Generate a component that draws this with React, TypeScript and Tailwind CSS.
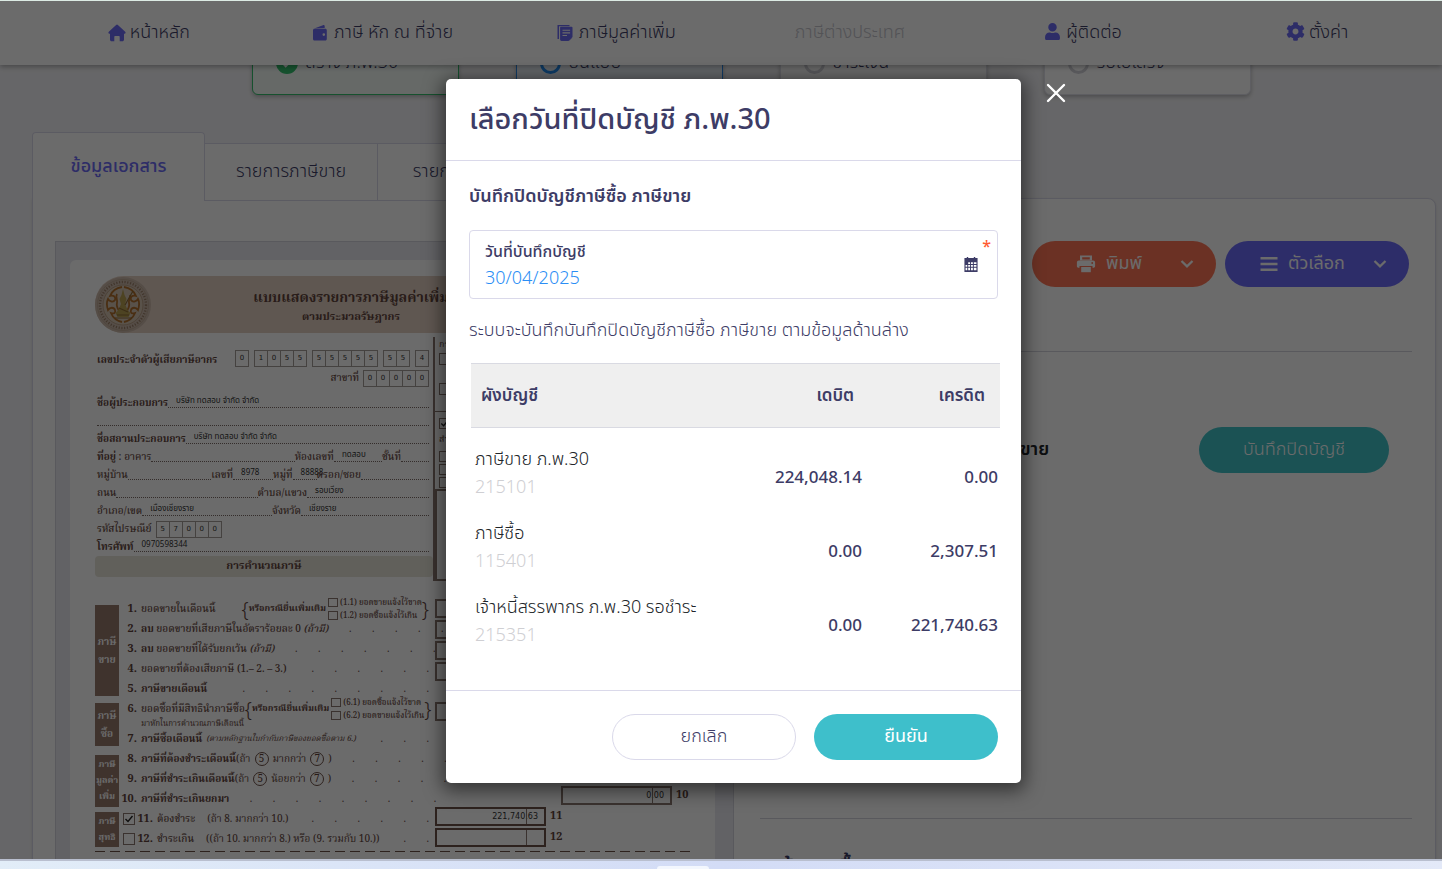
import React, { useState } from 'react';
import { FaCog, FaUser } from 'react-icons/fa';

const HomeIcon = () => (
  <svg viewBox="0 0 18 18" className="h-[18px] w-[18px]" fill="currentColor">
    <path d="M8.1.9a1.3 1.3 0 0 1 1.8 0l7.3 6.9c.8.8.4 1.9-.6 1.9H16v5.8c0 1-.7 1.8-1.7 1.8h-2.6v-4.4c0-.6-.4-1-1-1H7.3c-.6 0-1 .4-1 1v4.4H3.7c-1 0-1.700-.8-1.700-1.800V9.700h-.6c-1 0-1.400-1.100-.6-1.900z" />
  </svg>
);

const WalletIcon = () => (
  <svg viewBox="0 0 16 18" className="h-[18px] w-4" fill="currentColor">
    <path d="M2.200 4.500 11 1.200c.9-.3 1.700.3 1.700 1.200V4z" />
    <path
      fillRule="evenodd"
      d="M2.500 4.700h10.800c.9 0 1.500.6 1.500 1.500v8.900c0 .9-.6 1.500-1.500 1.500H2.500c-.9 0-1.500-.6-1.500-1.500V6.200c0-.9.600-1.500 1.500-1.500zm9.300 4.600a1.300 1.300 0 1 0 0 2.600 1.300 1.300 0 0 0 0-2.600z"
    />
  </svg>
);

const DocIcon = () => (
  <svg viewBox="0 0 16 18" className="h-[18px] w-4" fill="currentColor">
    <path d="M.5 1h1.500v14H.5zM.5 1h12v1.200H.5z" />
    <path
      fillRule="evenodd"
      d="M4 2.700h10.600c.5 0 .9.4.9.9V13l-4 4H4.500c-.8 0-1.400-.6-1.400-1.400V3.600c0-.5.4-.9.900-.9zm1.500 3v1.100h7.600V5.700zm0 2.600v1.100h7.600V8.300zm0 2.600V12h4.500v-1.100z"
    />
    <path d="M12.200 17v-3.200h3.200z" opacity=".5" />
  </svg>
);

const PrintIcon = () => (
  <svg viewBox="0 0 20 18" className="h-[18px] w-5" fill="currentColor">
    <path fillRule="evenodd" d="M4 .5h12v5H4zm2.200 1.800v2.200h7.600V2.300z" />
    <path
      fillRule="evenodd"
      d="M2.800 5.500h14.400c1.100 0 1.900.8 1.900 1.900v3.900c0 .8-.6 1.400-1.400 1.400h-1.200V11h-13v1.700H2.300c-.8 0-1.400-.6-1.400-1.400V7.400c0-1.100.8-1.900 1.900-1.900zm13.400 1.600a.9.9 0 1 0 0 1.800.9.900 0 0 0 0-1.800z"
    />
    <path d="M5.200 12h9.600v5.200H5.200z" />
  </svg>
);

const BarsIcon = () => (
  <svg viewBox="0 0 18 16" className="h-4 w-[18px]" fill="none" stroke="currentColor" strokeWidth="2.600">
    <path d="M.5 2.300h17M.5 8h17M.5 13.700h17" />
  </svg>
);

const ChevronIcon = () => (
  <svg viewBox="0 0 14 10" className="h-[10px] w-[14px]" fill="none" stroke="currentColor" strokeWidth="2.200">
    <path d="m1.500 2 5.500 5.400L12.500 2" />
  </svg>
);

const CalendarIcon = () => (
  <svg viewBox="0 0 14 16" className="h-[15px] w-[14px]" fill="currentColor">
    <path
      fillRule="evenodd"
      d="M2.500 0H4v1h6V0h1.500v1H14v15H0V1h2.500zM4 5.500v2h2v-2zm3 0v2h2v-2zm3 0v2h2.800v-2zM1.200 8.500v2H3v-2zm2.800 0v2h2v-2zm3 0v2h2v-2zm3 0v2h2.800v-2zm-8.800 3V14H3v-2.500zm2.800 0V14h2v-2.500zm3 0V14h2v-2.500zm3 0V14h2.800v-2.500z"
    />
  </svg>
);

const Emblem = () => (
  <svg viewBox="0 0 56 56" className="h-14 w-14 shrink-0" fill="none">
    <circle cx="28" cy="28" r="28" fill="#cbb8a9" />
    <circle cx="28" cy="28" r="23" stroke="#9c8069" strokeWidth="2.400" strokeDasharray="1.200 1.600" />
    <circle cx="28" cy="28" r="25.500" stroke="#b39d88" strokeWidth=".6" />
    <circle cx="28" cy="28" r="20" fill="#d3c3b1" stroke="#a98a6c" strokeWidth=".6" />
    <g stroke="#b06f2c" strokeWidth="1.800">
      <path d="M27 10c-6 1-10 4-12 9 4-1 6 1 5 4-2 3-6 1-7-1-2 4-1 8 0 11 2-3 6-3 7 0s-1 4-4 3c2 5 6 8 11 9" />
      <path d="M29 10c6 1 10 4 12 9-4-1-6 1-5 4 2 3 6 1 7-1 2 4 1 8 0 11-2-3-6-3-7 0s1 4 4 3c-2 5-6 8-11 9" />
      <path d="M22 17c-2 3 1 6 0 9s1 6 2 8M35 18c1 3-2 5-1 8s-1 6-2 8" />
    </g>
    <path d="m28 12 1.500 6 2 4-1.500 5 2.500 6 3 3-2 4h-11l-2-4 3-3 2.500-6-1.500-5 2-4z" fill="#b7a052" />
    <path d="m30 28 8-14M20 41h17M22 38h12M24 31l9 4" stroke="#8d6c35" strokeWidth="1.200" />
  </svg>
);

const CheckMark = () => (
  <svg viewBox="0 0 10 10" className="h-full w-full" fill="none" stroke="#222" strokeWidth="1.400">
    <path d="m1.500 5 2.500 2.500L8.500 2" />
  </svg>
);

const navItems = [
  { label: 'หน้าหลัก', icon: <HomeIcon />, gap: 'gap-1' },
  { label: 'ภาษี หัก ณ ที่จ่าย', icon: <WalletIcon />, gap: 'gap-1.5' },
  { label: 'ภาษีมูลค่าเพิ่ม', icon: <DocIcon />, gap: 'gap-1.5' },
  { label: 'ภาษีต่างประเทศ', icon: null, gap: '' },
  { label: 'ผู้ติดต่อ', icon: <FaUser className="mb-1 h-[17px] w-[15px]" />, gap: 'gap-1.5' },
  { label: 'ตั้งค่า', icon: <FaCog className="mb-1 h-[19px] w-[19px]" />, gap: 'gap-1' },
];

const steps = [
  { label: 'สร้าง ภ.พ.30', card: 'border-[#35c16f] bg-[#f3faf6]', mark: 'done' },
  { label: 'ยื่นแบบ', card: 'border-[#2f8ff0] bg-[#eef4fc]', mark: 'current' },
  { label: 'ชำระเงิน', card: 'border-[#dfe0ea] bg-white', mark: 'todo' },
  { label: 'รับใบเสร็จ', card: 'border-[#dfe0ea] bg-white', mark: 'todo' },
];

const accounts = [
  { name: 'ภาษีขาย ภ.พ.30', code: '215101', debit: '224,048.14', credit: '0.00' },
  { name: 'ภาษีซื้อ', code: '115401', debit: '0.00', credit: '2,307.51' },
  { name: 'เจ้าหนี้สรรพากร ภ.พ.30 รอชำระ', code: '215351', debit: '0.00', credit: '221,740.63' },
];

const StepMark: React.FC<{ mark: string }> = ({ mark }) => {
  if (mark === 'done') {
    return (
      <svg viewBox="0 0 22 22" className="h-[22px] w-[22px]">
        <circle cx="11" cy="11" r="11" fill="#35c16f" />
        <path d="m6.500 11 3.200 3.300 6-6.300" fill="none" stroke="#fff" strokeWidth="2" />
      </svg>
    );
  }
  return (
    <span
      className={`h-[21px] w-[21px] rounded-full border-[3px] ${mark === 'current' ? 'border-[#2490f5]' : 'border-[#d3d3da]'}`}
    />
  );
};

const Boxes: React.FC<{ digits: string }> = ({ digits }) => (
  <span className="flex h-[17px] border border-[#a59d99] bg-white font-['DejaVu_Sans',sans-serif] text-[7px] leading-[15px] font-normal text-[#333]">
    {digits.split('').map((d, i) => (
      <span key={i} className={`text-center ${i > 0 ? 'w-[13px] border-l border-[#a59d99]' : 'w-3'}`}>
        {d}
      </span>
    ))}
  </span>
);

const Line: React.FC<{ value?: string; className?: string }> = ({ value, className = 'flex-1' }) => (
  <span
    className={`mb-1 h-3 border-b border-dotted border-[#7d6d66] pl-2 font-['Noto_Sans_Thai','DejaVu_Sans',sans-serif] text-[8px] leading-[10px] font-normal whitespace-nowrap text-[#333] ${className}`}
  >
    {value}
  </span>
);

const Label: React.FC<{ children: React.ReactNode; bold?: boolean }> = ({ children, bold }) => (
  <span className={`whitespace-nowrap ${bold ? 'font-bold' : 'font-medium'}`}>{children}</span>
);

const Dots: React.FC<{ count: number }> = ({ count }) => (
  <span className="ml-auto flex">
    {Array.from({ length: count }, (_, i) => (
      <span key={i} className="w-[23px] text-right">
        .
      </span>
    ))}
  </span>
);

const Amend: React.FC<{ lines: string[] }> = ({ lines }) => (
  <span className="ml-auto flex items-center">
    <span className="font-['Noto_Sans'] text-[20px] leading-5 font-light">{'{'}</span>
    <span className="text-[9px] font-bold">หรือกรณียื่นเพิ่มเติม</span>
    <span className="ml-0.5 flex flex-col text-[8px] leading-[13px] font-medium">
      {lines.map((line) => (
        <span key={line} className="flex items-center gap-0.5">
          <span className="h-[9px] w-[10px] border border-[#8b7770]" />
          {line}
        </span>
      ))}
    </span>
    <span className="font-['Noto_Sans'] text-[20px] leading-5 font-light">{'}'}</span>
  </span>
);

interface ItemProps {
  no: string;
  dots?: number;
  amend?: string[];
  children: React.ReactNode;
}

const Item: React.FC<ItemProps> = ({ no, dots = 0, amend, children }) => (
  <div className="flex h-5 items-center whitespace-nowrap">
    <span className="flex w-[14px] shrink-0 justify-end text-[11px] font-bold">{no}.</span>
    <span className="ml-1 flex items-center">{children}</span>
    {amend && <Amend lines={amend} />}
    {dots > 0 && <Dots count={dots} />}
  </div>
);

const SideLabel: React.FC<{ lines: string[]; className: string }> = ({ lines, className }) => (
  <div
    className={`flex w-6 shrink-0 flex-col items-center justify-center bg-[#97796c] font-bold text-white ${className}`}
  >
    {lines.map((line) => (
      <span key={line}>{line}</span>
    ))}
  </div>
);

const Circled: React.FC<{ children: string }> = ({ children }) => (
  <span className="mx-1 flex h-[14px] w-[14px] items-center justify-center rounded-full border border-[#6d5148] text-[10px]">
    {children}
  </span>
);

const AmountBox: React.FC<{ value?: string; no: string; border: string }> = ({ value, no, border }) => (
  <div className="flex items-center gap-1">
    <span
      className={`relative flex h-[19px] w-[111px] justify-end border-2 pr-1.5 font-['DejaVu_Sans',sans-serif] text-[8px] leading-4 text-[#333] ${border}`}
    >
      {value}
      <span className="absolute top-0 right-[17px] h-full border-l border-[#8b7770]" />
    </span>
    <b className="text-[11px]">{no}</b>
  </div>
);

const TaxForm = () => (
  <article className="flex min-h-[700px] flex-col rounded-t-md bg-white px-[25px] pt-4 font-['Noto_Serif_Thai','Noto_Serif',serif] text-[10px] text-[#5f433a]">
    <header className="flex h-[57px] items-center rounded-l-full rounded-r-md bg-[#e2cfc1]">
      <Emblem />
      <div className="ml-[25px] w-[350px] pt-1 text-center font-bold">
        <h2 className="text-[14px] leading-5">แบบแสดงรายการภาษีมูลค่าเพิ่ม</h2>
        <p className="text-[11px] leading-[18px]">ตามประมวลรัษฎากร</p>
      </div>
    </header>

    <div className="mt-1 flex">
      <div className="w-[338px] pt-[11px]">
        <div className="flex h-5 items-center pr-1 pl-0.5">
          <span className="pt-1">
            <Label bold>เลขประจำตัวผู้เสียภาษีอากร</Label>
          </span>
          <span className="ml-auto flex gap-[5px]">
            <Boxes digits="0" />
            <Boxes digits="1055" />
            <Boxes digits="55555" />
            <Boxes digits="55" />
            <Boxes digits="4" />
          </span>
        </div>
        <div className="flex h-5 items-center justify-end gap-1 pr-1">
          <Label>สาขาที่</Label>
          <Boxes digits="00000" />
        </div>
        <div className="mt-1.5 flex flex-col pr-1 pl-0.5 leading-[18px] *:flex *:h-[18px] *:items-end">
          <div>
            <Label bold>ชื่อผู้ประกอบการ</Label>
            <Line value="บริษัท ทดสอบ จำกัด จำกัด" />
          </div>
          <div>
            <Line />
          </div>
          <div>
            <Label bold>ชื่อสถานประกอบการ</Label>
            <Line value="บริษัท ทดสอบ จำกัด จำกัด" />
          </div>
          <div>
            <Label>
              <b>ที่อยู่</b> : อาคาร
            </Label>
            <Line />
            <Label>ห้องเลขที่</Label>
            <Line value="ทดสอบ" className="w-12" />
            <Label>ชั้นที่</Label>
            <Line className="w-7" />
          </div>
          <div>
            <Label>หมู่บ้าน</Label>
            <Line />
            <Label>เลขที่</Label>
            <Line value="8978" className="w-10" />
            <Label>หมู่ที่</Label>
            <Line value="88888" className="w-6" />
            <Label>ตรอก/ซอย</Label>
            <Line className="w-[68px]" />
          </div>
          <div>
            <Label>ถนน</Label>
            <Line />
            <Label>ตำบล/แขวง</Label>
            <Line value="รอบเวียง" className="w-[122px]" />
          </div>
          <div>
            <Label>อำเภอ/เขต</Label>
            <Line value="เมืองเชียงราย" />
            <Label>จังหวัด</Label>
            <Line value="เชียงราย" className="w-32" />
          </div>
          <div className="gap-1">
            <Label>รหัสไปรษณีย์</Label>
            <Boxes digits="57000" />
          </div>
          <div>
            <Label bold>โทรศัพท์</Label>
            <Line value="0970598344" />
          </div>
        </div>
        <div className="h-[21px] rounded bg-[#e8e4da] text-center text-[11px] leading-[21px] font-bold">
          การคำนวณภาษี
        </div>
      </div>
      <div className="flex h-[244px] min-w-0 flex-1 flex-col border-l-2 border-[#8b7770] text-[9px] leading-4">
        <div className="h-[75px] border-b border-[#8b7770] pl-1">
          <p>กรณียื่นแบบ</p>
          <p className="mb-[18px] h-3 w-3 border border-[#8b7770]" />
          <p className="h-3 w-3 border border-[#8b7770]" />
        </div>
        <div className="flex flex-1 flex-col gap-0.5 pt-1.5 pl-1">
          <p className="h-[11px] w-[11px] border border-[#8b7770]">
            <CheckMark />
          </p>
          <p className="leading-[18px]">สำหรับบันทึกข้อมูล</p>
          <p className="h-[11px] w-[11px] border border-[#8b7770]" />
          <p className="h-[11px] w-[11px] border border-[#8b7770]" />
          <p className="h-[11px] w-[11px] border border-[#8b7770]" />
        </div>
        <div className="h-[92px] border-2 border-[#8b7770]" />
      </div>
    </div>

    <div className="mt-[18px] flex">
      <div className="flex w-[338px] flex-col pr-1">
        <div className="flex">
          <SideLabel lines={['ภาษี', 'ขาย']} className="mt-1.5 mb-[3px] text-[10px] leading-[18px]" />
          <div className="min-w-0 flex-1 pl-1">
            <Item no="1" amend={['(1.1) ยอดขายแจ้งไว้ขาด', '(1.2) ยอดซื้อแจ้งไว้เกิน']}>
              <Label>ยอดขายในเดือนนี้</Label>
            </Item>
            <Item no="2" dots={5}>
              <Label>
                <b>ลบ</b> ยอดขายที่เสียภาษีในอัตราร้อยละ 0 <i>(ถ้ามี)</i>
              </Label>
            </Item>
            <Item no="3" dots={7}>
              <Label>
                <b>ลบ</b> ยอดขายที่ได้รับยกเว้น <i>(ถ้ามี)</i>
              </Label>
            </Item>
            <Item no="4" dots={6}>
              <Label>ยอดขายที่ต้องเสียภาษี (1.– 2. – 3.)</Label>
            </Item>
            <Item no="5" dots={9}>
              <Label bold>ภาษีขายเดือนนี้</Label>
            </Item>
          </div>
        </div>
        <div className="flex h-[50px]">
          <SideLabel lines={['ภาษี', 'ซื้อ']} className="mt-1 mb-[3px] text-[10px] leading-[18px]" />
          <div className="min-w-0 flex-1 pl-1">
            <Item no="6" amend={['(6.1) ยอดซื้อแจ้งไว้ขาด', '(6.2) ยอดขายแจ้งไว้เกิน']}>
              <Label>ยอดซื้อที่มีสิทธินำภาษีซื้อ</Label>
            </Item>
            <p className="pl-[18px] text-[8px] leading-[10px]">มาหักในการคำนวณภาษีเดือนนี้</p>
            <Item no="7" dots={3}>
              <Label bold>ภาษีซื้อเดือนนี้</Label>
              <i className="ml-1 text-[8px]">(ตามหลักฐานใบกำกับภาษีของยอดซื้อตาม 6.)</i>
            </Item>
          </div>
        </div>
        <div className="flex">
          <SideLabel lines={['ภาษี', 'มูลค่า', 'เพิ่ม']} className="mt-1.5 mb-0.5 text-[9px] leading-[16px]" />
          <div className="min-w-0 flex-1 pl-1">
            <Item no="8" dots={5}>
              <Label bold>ภาษีที่ต้องชำระเดือนนี้</Label>(ถ้า <Circled>5</Circled> มากกว่า <Circled>7</Circled>)
            </Item>
            <Item no="9" dots={5}>
              <Label bold>ภาษีที่ชำระเกินเดือนนี้</Label>(ถ้า <Circled>5</Circled> น้อยกว่า <Circled>7</Circled>)
            </Item>
            <Item no="10" dots={9}>
              <Label bold>ภาษีที่ชำระเกินยกมา</Label>
            </Item>
          </div>
        </div>
        <div className="flex h-10">
          <SideLabel lines={['ภาษี', 'สุทธิ']} className="mt-[3px] mb-0.5 text-[9px] leading-[16px]" />
          <div className="min-w-0 flex-1 pl-1">
            <div className="flex items-center">
              <span className="mr-1 h-3 w-3 shrink-0 border border-[#8b7770]">
                <CheckMark />
              </span>
              <span className="min-w-0 flex-1">
                <Item no="11" dots={6}>
                  <Label>ต้องชำระ</Label>
                  <span className="ml-3">(ถ้า 8. มากกว่า 10.)</span>
                </Item>
              </span>
            </div>
            <div className="flex items-center">
              <span className="mr-1 h-3 w-3 shrink-0 border border-[#8b7770]" />
              <span className="min-w-0 flex-1">
                <Item no="12" dots={2}>
                  <Label>ชำระเกิน</Label>
                  <span className="ml-3">((ถ้า 10. มากกว่า 8.) หรือ (9. รวมกับ 10.))</span>
                </Item>
              </span>
            </div>
          </div>
        </div>
      </div>
      <div className="ml-0.5 flex flex-1 flex-col">
        <div className="flex h-[103px] w-[111px] flex-col gap-0.5 *:h-[19px] *:border-2 *:border-[#8b7770]">
          <span />
          <span />
          <span />
          <span />
        </div>
        <div className="h-[84px]">
          <span className="block h-[19px] w-[111px] border-2 border-[#8b7770]" />
        </div>
        <div className="ml-[126px]">
          <AmountBox value="0.00" no="10" border="border-[#8b7770]" />
        </div>
        <div className="mt-0.5">
          <AmountBox value="221,740.63" no="11" border="border-[#6d5148]" />
        </div>
        <div className="mt-0.5">
          <AmountBox no="12" border="border-[#6d5148]" />
        </div>
      </div>
    </div>
    <div className="mt-0.5 h-px bg-[repeating-linear-gradient(90deg,#6d5148_0_10px,transparent_10px_15px)]" />
  </article>
);

const CloseDateDialog: React.FC<{ onClose: () => void }> = ({ onClose }) => {
  const [date, setDate] = useState('30/04/2025');

  return (
    <section
      role="dialog"
      aria-labelledby="dialog-title"
      className="relative ml-[25px] w-full max-w-[575px] rounded-[5px] bg-white shadow-[0_4px_18px_4px_rgba(0,0,0,0.5)]"
    >
      <button onClick={onClose} aria-label="Close" className="absolute top-1 -right-[45px] text-white">
        <svg viewBox="0 0 20 20" className="h-5 w-5" fill="none" stroke="currentColor" strokeWidth="2.400" strokeLinecap="round">
          <path d="m2 2 16 16M18 2 2 18" />
        </svg>
      </button>

      <header className="border-b border-[#dad9ea] px-[23px] pt-[21px] pb-5">
        <h1 id="dialog-title" className="text-[29px] leading-10 font-medium">
          เลือกวันที่ปิดบัญชี ภ.พ.30
        </h1>
      </header>

      <div className="px-[23px] pt-[22px] pb-10">
        <h2 className="text-lg leading-7 font-semibold">บันทึกปิดบัญชีภาษีซื้อ ภาษีขาย</h2>

        <div className="mt-[19px] flex h-[69px] items-center rounded border border-[#dad9ea] pr-1.5 pl-[15px]">
          <div className="flex flex-1 flex-col pt-0.5">
            <label htmlFor="close-date" className="text-base leading-[26px] font-medium">
              วันที่บันทึกบัญชี
            </label>
            <input
              id="close-date"
              value={date}
              onChange={(e) => setDate(e.target.value)}
              className="h-7 w-full bg-transparent text-lg leading-7 font-light text-[#2b8ef5] outline-none"
            />
          </div>
          <CalendarIcon />
          <span className="mb-9 ml-1 text-base leading-5 font-medium text-[#ff5c33]">*</span>
        </div>

        <p className="mt-[18px] text-lg leading-7 font-light">
          ระบบจะบันทึกบันทึกปิดบัญชีภาษีซื้อ ภาษีขาย ตามข้อมูลด้านล่าง
        </p>

        <div className="mt-[18px] -mr-0.5 ml-0.5">
          <table className="w-full border-separate border-spacing-0">
            <thead>
              <tr className="h-[65px] bg-[#efefef] text-[17px] *:border-y *:border-[#d9dae2] *:pt-0.5 *:font-semibold">
                <th className="pl-2.5 text-left">ผังบัญชี</th>
                <th className="w-36 pr-2.5 text-right">เดบิต</th>
                <th className="w-[136px] pr-[15px] text-right">เครดิต</th>
              </tr>
            </thead>
            <tbody>
              {accounts.map((a) => (
                <tr key={a.code} className="h-[74px] align-top">
                  <td className="pt-[18px] pl-1 text-lg leading-7 font-light text-[#212529]">
                    {a.name}
                    <span className="block text-[#cfcfd3]">{a.code}</span>
                  </td>
                  <td className="pt-9 pr-0.5 text-right text-[17px] leading-7 font-medium">{a.debit}</td>
                  <td className="pt-9 pr-0.5 text-right text-[17px] leading-7 font-medium">{a.credit}</td>
                </tr>
              ))}
            </tbody>
          </table>
        </div>
      </div>

      <footer className="flex justify-end gap-[18px] border-t border-[#dad9ea] p-[23px] text-lg">
        <button onClick={onClose} className="h-[46px] w-[184px] rounded-full border border-[#dad9ea] font-light">
          ยกเลิก
        </button>
        <button onClick={onClose} className="h-[46px] w-[184px] rounded-full bg-[#3ebfcb] text-white">
          ยืนยัน
        </button>
      </footer>
    </section>
  );
};

const App: React.FC = () => {
  const [isOpen, setIsOpen] = useState(true);

  return (
    <div className="relative flex h-screen flex-col overflow-hidden border-t border-[#dcebe4] bg-[#f4f4f7] font-['Noto_Sans_Thai','Noto_Sans',sans-serif] text-[#3d3c66]">
      <header className="relative z-10 bg-white pr-2 pl-8 shadow-[0_2px_5px_rgba(0,0,0,0.3)]">
        <nav className="grid h-16 grid-cols-6 text-lg font-light">
          {navItems.map((item) => (
            <a
              key={item.label}
              href="#"
              className={`flex items-center justify-center ${item.gap} ${item.icon ? '' : 'text-[#c5c5cd]'}`}
            >
              {item.icon && <span className="text-[#6d6bf5]">{item.icon}</span>}
              {item.label}
            </a>
          ))}
        </nav>
      </header>

      <main className="min-h-0 flex-1 overflow-hidden pr-1.5 pl-8">
        <div className="-mt-9 flex justify-center gap-[57px] pl-[34px]">
          {steps.map((step) => (
            <div
              key={step.label}
              className={`flex h-[66px] w-[207px] items-center gap-2 rounded-md border pt-0.5 pl-[23px] text-lg font-light shadow-[0_2px_4px_rgba(0,0,0,0.25)] ${step.card}`}
            >
              <StepMark mark={step.mark} />
              {step.label}
            </div>
          ))}
        </div>

        <div className="mt-[37px] flex items-end text-lg font-light">
          <button className="h-[69px] w-[173px] rounded-t border border-b-0 border-[#dad9ea] bg-white font-medium text-[#6d6bf5]">
            ข้อมูลเอกสาร
          </button>
          <button className="h-[58px] w-[173px] border-y border-r border-[#dad9ea] bg-white">รายการภาษีขาย</button>
          <button className="h-[58px] w-[173px] border-y border-r border-[#dad9ea] bg-white">รายการภาษีซื้อ</button>
        </div>

        <div className="-mt-[3px] flex rounded-lg rounded-tl-none border border-[#dad9ea] bg-white pt-[42px] pl-[22px] shadow-sm">
          <div className="min-w-0 flex-1 border border-[#d3d4de] bg-[#e9eaf0] px-[14px] pt-[18px] pr-[18px]">
            <TaxForm />
          </div>
          <div className="w-[701px] pr-[23px] pl-[26px]">
            <div className="flex justify-end gap-[9px] pr-[3px]">
              <button className="flex h-[46px] w-[184px] items-center rounded-full bg-[#ff7657] pr-[22px] pl-11 text-lg text-white">
                <PrintIcon />
                <span className="ml-2.5">พิมพ์</span>
                <span className="ml-auto">
                  <ChevronIcon />
                </span>
              </button>
              <button className="flex h-[46px] w-[184px] items-center rounded-full bg-[#6d6bfb] pr-[22px] pl-[35px] text-lg text-white">
                <BarsIcon />
                <span className="ml-2.5">ตัวเลือก</span>
                <span className="ml-auto">
                  <ChevronIcon />
                </span>
              </button>
            </div>
            <div className="mt-16 flex h-[468px] justify-between border-y border-[#d3d4de] pt-[75px] pr-[23px] pl-[67px]">
              <h2 className="text-lg leading-[46px] font-semibold text-[#212529]">บันทึกปิดบัญชีภาษีซื้อ ภาษีขาย</h2>
              <button className="h-[46px] w-[190px] rounded-full bg-[#40c3c9] text-lg font-light text-white">บันทึกปิดบัญชี</button>
            </div>
            <h2 className="pt-[35px] pl-5 text-2xl font-semibold">ข้อมูลซื้อ</h2>
          </div>
        </div>
      </main>

      {isOpen && (
        <div className="absolute inset-0 z-20 flex items-start justify-center bg-black/58 pt-[78px]">
          <CloseDateDialog onClose={() => setIsOpen(false)} />
        </div>
      )}

      <footer className="relative z-30 flex h-[10px] items-end justify-center border-t-2 border-[#b9bfcf] bg-gradient-to-r from-[#e2edf8] via-[#d3dcf6] to-[#e3e9f8] pr-[76px]">
        <span className="h-[3px] w-[52px] rounded-t bg-[#f3f7fe]" />
      </footer>
    </div>
  );
};

export default App;
